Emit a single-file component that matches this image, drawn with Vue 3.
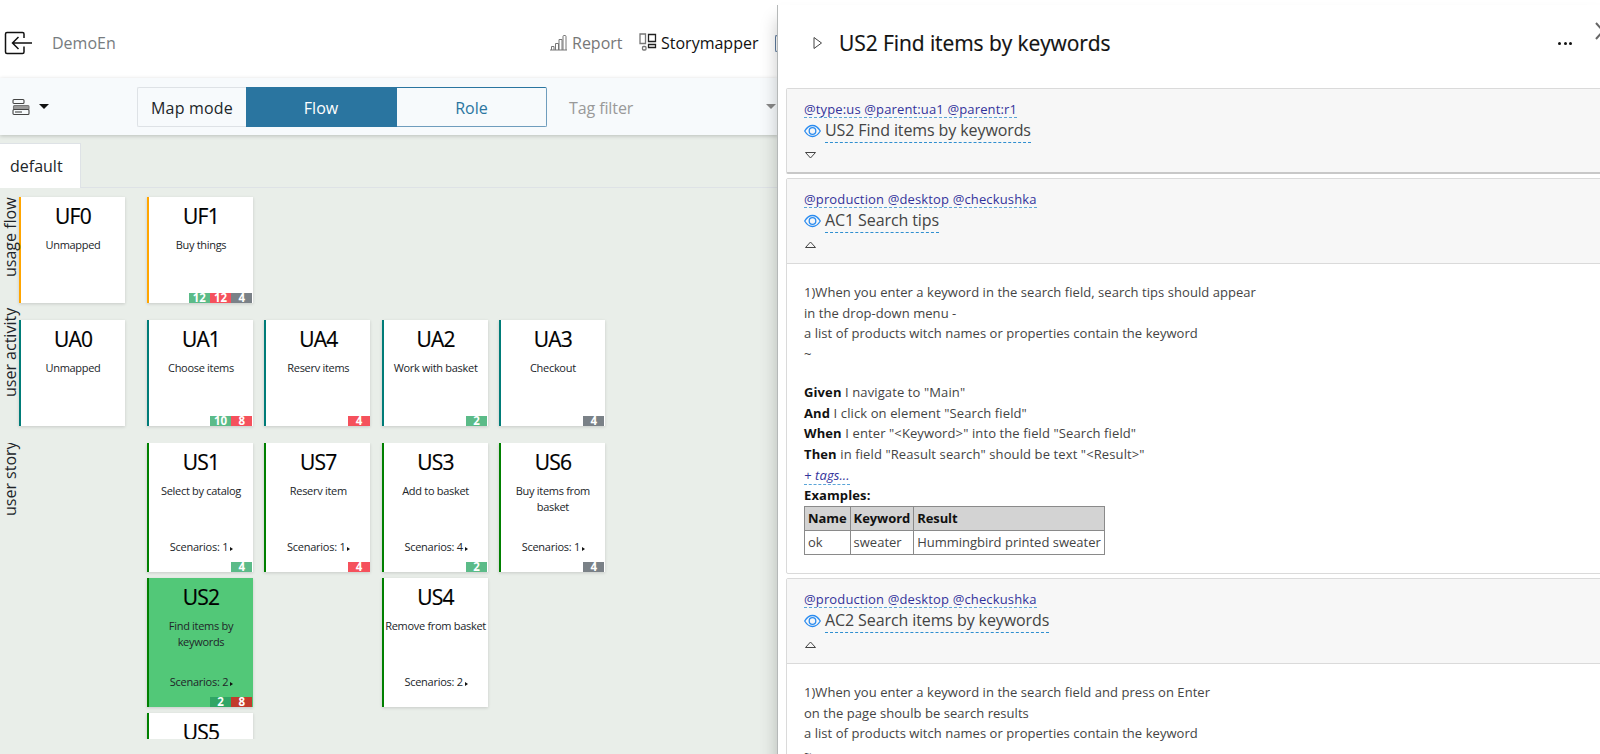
<script setup>
import { ref } from "vue";

let mode = ref("Flow");
let selected = ref("US2");

//badge colors: g = passed, r = failed, n = not run
let flows = [
  { id: "UF0", name: "Unmapped", badges: [] },
  { id: "UF1", name: "Buy things", badges: [["g", 12], ["r", 12], ["n", 4]] },
];

let activities = [
  { id: "UA0", name: "Unmapped", badges: [] },
  { id: "UA1", name: "Choose items", badges: [["g", 10], ["r", 8]] },
  { id: "UA4", name: "Reserv items", badges: [["r", 4]] },
  { id: "UA2", name: "Work with basket", badges: [["g", 2]] },
  { id: "UA3", name: "Checkout", badges: [["n", 4]] },
];

//every inner array is one column of stories
let stories = [
  [],
  [
    { id: "US1", name: "Select by catalog", count: 1, badges: [["g", 4]] },
    { id: "US2", name: "Find items by keywords", count: 2, badges: [["g", 2], ["r", 8]] },
    { id: "US5", name: "", count: 0, badges: [] },
  ],
  [{ id: "US7", name: "Reserv item", count: 1, badges: [["r", 4]] }],
  [
    { id: "US3", name: "Add to basket", count: 4, badges: [["g", 2]] },
    { id: "US4", name: "Remove from basket", count: 2, badges: [] },
  ],
  [{ id: "US6", name: "Buy items from basket", count: 1, badges: [["n", 4]] }],
];

let scenarios = [
  { tags: "@type:us @parent:ua1 @parent:r1", title: "US2 Find items by keywords", open: false },
  {
    tags: "@production @desktop @checkushka",
    title: "AC1 Search tips",
    open: true,
    text: [
      "1)When you enter a keyword in the search field, search tips should appear",
      "in the drop-down menu -",
      "a list of products witch names or properties contain the keyword",
      "~",
    ],
    steps: [
      ["Given", 'I navigate to "Main"'],
      ["And", 'I click on element "Search field"'],
      ["When", 'I enter "<Keyword>" into the field "Search field"'],
      ["Then", 'in field "Reasult search" should be text "<Result>"'],
    ],
  },
  {
    tags: "@production @desktop @checkushka",
    title: "AC2 Search items by keywords",
    open: true,
    text: [
      "1)When you enter a keyword in the search field and press on Enter",
      "on the page shoulb be search results",
      "a list of products witch names or properties contain the keyword",
      "~",
    ],
  },
];
</script>

<template>
  <div class="page">
    <header class="topbar">
      <svg class="exit" width="30" height="24" viewBox="0 0 30 24">
        <path d="M20 7V3Q20 1.500 18.500 1.500H3Q1.500 1.500 1.500 3V21Q1.500 22.500 3 22.500H18.500Q20 22.500 20 21V15.500M28 12H9M14.500 6L8.500 12L14.500 18" />
      </svg>
      <span class="project">DemoEn</span>
      <nav class="links">
        <span class="link">
          <svg width="18" height="18" viewBox="0 0 18 18">
            <path d="M0 16H17M1.500 16V12.500H4V16M5.500 16V9.500H8.500V16M9 16V5.500H12V16M13 16V2.500Q13 1.500 14 1.500H15Q16 1.500 16 2.500V16" />
          </svg>
          <span class="reportText">Report</span>
        </span>
        <span class="link active">
          <svg width="18" height="18" viewBox="0 0 18 18">
            <path class="light" d="M1 1H6.500V10.500H1Z" />
            <path d="M9.500 1.500H16.500V8.500H9.500ZM9.500 11.500H16.500V14.500H9.500Z" />
            <rect class="light" x="3.500" y="13.500" width="3.500" height="3.500" rx="1" />
          </svg>
          <span class="storyText">Storymapper</span>
        </span>
        <span class="cut"></span>
      </nav>
    </header>

    <div class="toolbar">
      <svg class="layers" width="18" height="18" viewBox="0 0 18 18">
        <rect x="1" y="1.500" width="11" height="4" rx="1" />
        <rect class="fill" x="1.500" y="7.500" width="15.500" height="4" rx="1" />
        <rect x="1" y="11.500" width="16" height="5" rx="1" />
        <path d="M3 14H10" />
      </svg>
      <span class="caret"></span>
      <div class="modes">
        <span class="modeLabel">Map mode</span>
        <span v-for="m in ['Flow', 'Role']" class="modeBtn" :class="{ on: mode == m }" @click="mode = m">{{ m }}</span>
      </div>
      <span class="filter">Tag filter</span>
      <span class="caret grey"></span>
    </div>

    <div class="tabs"><span class="tab">default</span></div>

    <main class="board">
      <section class="row flowRow">
        <span class="rowName">usage flow</span>
        <div class="grid">
          <div v-for="c in flows" class="card uf">
            <h2>{{ c.id }}</h2>
            <p>{{ c.name }}</p>
            <div class="badges"><b v-for="b in c.badges" :class="b[0]">{{ b[1] }}</b></div>
          </div>
        </div>
      </section>
      <section class="row actRow">
        <span class="rowName">user activity</span>
        <div class="grid">
          <div v-for="c in activities" class="card ua">
            <h2>{{ c.id }}</h2>
            <p>{{ c.name }}</p>
            <div class="badges"><b v-for="b in c.badges" :class="b[0]">{{ b[1] }}</b></div>
          </div>
        </div>
      </section>
      <section class="row storyRow">
        <span class="rowName">user story</span>
        <div class="grid">
          <div v-for="col in stories" class="stack">
            <div v-for="c in col" class="card us" :class="{ selected: selected == c.id }" @click="selected = c.id">
              <h2>{{ c.id }}</h2>
              <p>{{ c.name }}</p>
              <div v-if="c.count" class="count">Scenarios: {{ c.count }}<i></i></div>
              <div class="badges"><b v-for="b in c.badges" :class="b[0]">{{ b[1] }}</b></div>
            </div>
          </div>
        </div>
      </section>
    </main>

    <!-- drawer that slides over the map -->
    <aside class="drawer">
      <div class="drawerHead">
        <svg width="10" height="14" viewBox="0 0 10 14"><path d="M1 1.500L8.500 7L1 12.500Z" /></svg>
        <h1>US2 Find items by keywords</h1>
        <span class="dots"><i></i><i></i><i></i></span>
        <svg class="close" width="16" height="18" viewBox="0 0 16 18"><path d="M1 1L15 17M15 1L1 17" /></svg>
      </div>

      <article v-for="s in scenarios" class="scenario" :class="{ closed: !s.open }">
        <div class="head">
          <div class="tagLine"><span class="tags">{{ s.tags }}</span></div>
          <div class="titleLine">
            <svg width="17" height="14" viewBox="0 0 17 14">
              <path d="M0.700 7Q4 1.500 8.500 1.500T16.300 7Q13 12.500 8.500 12.500T0.700 7Z" />
              <circle cx="8.500" cy="7" r="3.300" />
            </svg>
            <span class="title">{{ s.title }}</span>
          </div>
          <svg class="arrow" width="12" height="8" viewBox="0 0 12 8">
            <path :d="s.open ? 'M1.500 6.500L6.500 1L11.500 6.500Z' : 'M1.500 1.500L6.500 7L11.500 1.500Z'" />
          </svg>
        </div>
        <div v-if="s.open" class="body">
          <div v-for="t in s.text">{{ t }}</div>
          <div v-if="s.steps" class="steps">
            <div v-for="st in s.steps"><strong>{{ st[0] }}</strong> {{ st[1] }}</div>
            <div><em class="addTags">+ tags...</em></div>
            <div><strong>Examples:</strong></div>
            <table>
              <tbody>
                <tr><th>Name</th><th>Keyword</th><th>Result</th></tr>
                <tr><td>ok</td><td>sweater</td><td>Hummingbird printed sweater</td></tr>
              </tbody>
            </table>
          </div>
        </div>
      </article>
    </aside>
  </div>
</template>

<style>
body {
  overflow: hidden;
}
</style>

<style scoped>
* {
  box-sizing: border-box;
}

.page {
  position: relative;
  width: 1600px;
  height: 754px;
  overflow: hidden;
  background: #e9eee9;
  color: #212529;
  font-family: "Open Sans", "Noto Sans", sans-serif;
}

svg {
  flex: none;
  fill: none;
  stroke: #444;
  stroke-width: 1;
}

h1, h2, p {
  margin: 0;
  font-weight: 400;
}

/* top */
.topbar {
  display: flex;
  align-items: center;
  height: 78px;
  padding: 8px 823px 0 4px;
  background: #fff;
}

.exit {
  stroke: #111;
  stroke-width: 1.5;
}

.project {
  margin-left: 18px;
  font-size: 16px;
  color: #777c80;
}

.links {
  display: flex;
  align-items: center;
  margin-left: auto;
}

.link {
  display: flex;
  align-items: center;
  gap: 4px;
  margin-right: 16px;
  font-size: 16px;
  color: #777;
}

.link svg {
  stroke: #777;
}

.link.active {
  margin-right: 17px;
  color: #111;
}

.link.active svg {
  stroke: #222;
  stroke-width: 1.3;
  margin-top: -2px;
}

.link.active svg .light {
  stroke: #777;
}

.reportText {
  width: 51px;
}

.storyText {
  width: 97px;
}

.cut {
  width: 2px;
  height: 17px;
  border: 1px solid #5d7a9c;
  border-right: 0;
  border-radius: 2px 0 0 2px;
}

/* toolbar */
.toolbar {
  display: flex;
  align-items: center;
  width: 778px;
  height: 57px;
  padding: 0 2px 0 12px;
  background: #f7fafc;
  box-shadow: 0 1px 4px rgba(0, 0, 0, 0.2);
  position: relative;
}

.layers {
  stroke-width: 1.1;
}

.layers .fill {
  fill: #999;
  stroke: #777;
}

.caret {
  margin-left: 9px;
  border: 5px solid transparent;
  border-top-color: #111;
  border-bottom: 0;
}

.caret.grey {
  margin-left: auto;
  border-top-color: #888;
}

.modes {
  display: flex;
  height: 40px;
  margin-left: 88px;
  font-size: 16px;
  line-height: 41px;
  text-align: center;
}

.modeLabel {
  width: 109px;
  border: 1px solid #dee2e6;
  border-right: 0;
  border-radius: 2px 0 0 2px;
  letter-spacing: 0.2px;
}

.modeBtn {
  width: 150px;
  color: #2a75a0;
  border: 1px solid #6f9dbd;
  border-top-color: #2a75a0;
  border-left: 0;
  border-radius: 0 2px 2px 0;
}

.modeBtn.on {
  width: 151px;
  background: #2a75a0;
  border-color: #2a75a0;
  color: #fff;
  border-radius: 0;
}

.filter {
  margin-left: 22px;
  padding-top: 2px;
  font-size: 16px;
  color: #999;
  letter-spacing: -0.1px;
}

.tabs {
  display: flex;
  width: 778px;
  height: 53px;
  padding-top: 8px;
  border-bottom: 1px solid #dee2e6;
}

.tab {
  width: 81px;
  height: 45px;
  padding-left: 10px;
  background: #fff;
  border: 1px solid #dee2e6;
  border-width: 1px 1px 0 0;
  font-size: 16px;
  line-height: 45px;
}

/* map */
.board {
  height: 551px;
  padding-top: 9px;
  overflow: hidden;
}

.row {
  display: flex;
}

.flowRow,
.actRow {
  height: 123px;
}

.storyRow {
  height: 296px;
  overflow: hidden;
}

.rowName {
  flex: none;
  width: 20px;
  margin-right: -1px;
  writing-mode: vertical-rl;
  transform: rotate(180deg);
  font-size: 16px;
  line-height: 20px;
  text-align: right;
  white-space: nowrap;
}

.flowRow .rowName {
  height: 121px;
  padding-bottom: 0;
}

.actRow .rowName {
  height: 121px;
  margin-top: -12px;
}

.storyRow .rowName {
  height: 121px;
  margin-top: -2px;
}

.grid {
  display: grid;
  grid-template-columns: 116.700px repeat(4, 106px);
  column-gap: 11.300px;
  align-items: start;
}

.stack {
  display: flex;
  flex-direction: column;
  gap: 6px;
}

.card {
  display: flex;
  flex-direction: column;
  width: 106px;
  height: 106px;
  border-left: 2px solid orange;
  background: #fff;
  box-shadow: 0 1px 3px rgba(0, 0, 0, 0.15);
  text-align: center;
}

.card.ua {
  border-color: #007c78;
}

.card.us {
  height: 129px;
  border-color: #008000;
}

.card.selected {
  background: #52c878;
}

.card h2 {
  margin-top: 5px;
  font-size: 21px;
  line-height: 29px;
  letter-spacing: -0.8px;
  color: #000;
  -webkit-text-stroke: 0.2px #000;
}

.card p {
  margin: 6px 0 0;
  font-size: 11px;
  line-height: 16px;
  letter-spacing: -0.3px;
}

.us p {
  height: 32px;
}

.selected p {
  padding: 0 8px;
}

.count {
  margin-top: 24px;
  padding-left: 1px;
  font-size: 11px;
  line-height: 16px;
  letter-spacing: -0.26px;
}

.count i {
  display: inline-block;
  margin-left: 2px;
  border: 2.5px solid transparent;
  border-left: 3px solid #111;
  border-right: 0;
}

.badges {
  display: flex;
  justify-content: flex-end;
  margin-top: auto;
  padding-right: 0.500px;
}

.badges b {
  width: 21.300px;
  height: 10.500px;
  color: #fff;
  font-size: 11.500px;
  line-height: 10.500px;
}

.g {
  background: #5bbb88;
}

.r {
  background: #f5515c;
}

.n {
  background: #7a8187;
}

.selected .g {
  background: #30a565;
}

.selected .r {
  background: #c23a2c;
}

/* drawer */
.drawer {
  position: absolute;
  top: 5px;
  left: 777px;
  width: 823px;
  height: 760px;
  padding-left: 8px;
  border-left: 1px solid #b5b8b8;
  background: #fff;
  box-shadow: 0 14px 16px rgba(0, 0, 0, 0.22);
}

.drawerHead {
  display: flex;
  align-items: center;
  height: 83px;
  padding: 0 0 7px 27px;
  position: relative;
}

.drawerHead h1 {
  margin-left: 16px;
  font-size: 21px;
  line-height: 30px;
  letter-spacing: -0.08px;
  color: #111;
  -webkit-text-stroke: 0.2px #111;
}

.dots {
  display: flex;
  gap: 2.500px;
  margin-left: auto;
  margin-right: 28px;
}

.dots i {
  width: 3px;
  height: 3px;
  border-radius: 50%;
  background: #111;
}

.close {
  position: absolute;
  top: 17px;
  left: 809px;
  stroke: #666;
  stroke-width: 2;
}

.scenario {
  width: 830px;
  margin-bottom: 4px;
  border: 1px solid #dadada;
  border-radius: 2px;
}

.scenario.closed {
  border-bottom: 2px solid #c8c8c8;
}

.head {
  height: 85px;
  padding: 10px 17px 0;
  background: #f7f7f7;
  border-bottom: 1px solid #dadada;
}

.closed .head {
  height: 83px;
  border-bottom: 0;
}

.tagLine {
  display: flex;
}

.tags {
  height: 19px;
  color: #33339b;
  border-bottom: 1px dashed #5aa5d8;
  font-size: 13px;
  line-height: 20px;
  letter-spacing: 0.14px;
}

.titleLine {
  display: flex;
  align-items: center;
  height: 25px;
}

.titleLine svg {
  stroke: #2b8cf0;
  stroke-width: 1.3;
  margin-right: 4px;
}

.title {
  height: 25px;
  border-bottom: 1px dashed #2f8fd0;
  font-size: 16px;
  line-height: 25px;
  letter-spacing: -0.1px;
  color: #444;
}

.arrow {
  display: block;
  margin: 8px 0 0;
}

.body {
  padding: 18px 17px;
  font-size: 13px;
  line-height: 20.700px;
  letter-spacing: 0.05px;
  color: #444;
}

.steps {
  margin-top: 17px;
  letter-spacing: 0.11px;
}

strong {
  color: #111;
}

.addTags {
  color: #33339b;
  border-bottom: 1px dashed #5aa5d8;
}

table {
  border-collapse: collapse;
  letter-spacing: 0;
}

th,
td {
  height: 24px;
  padding: 1px 3px;
  border: 1px solid #8a8a8a;
  text-align: left;
}

th {
  background: #d3d3d3;
  color: #111;
  letter-spacing: -0.07px;
}
</style>
